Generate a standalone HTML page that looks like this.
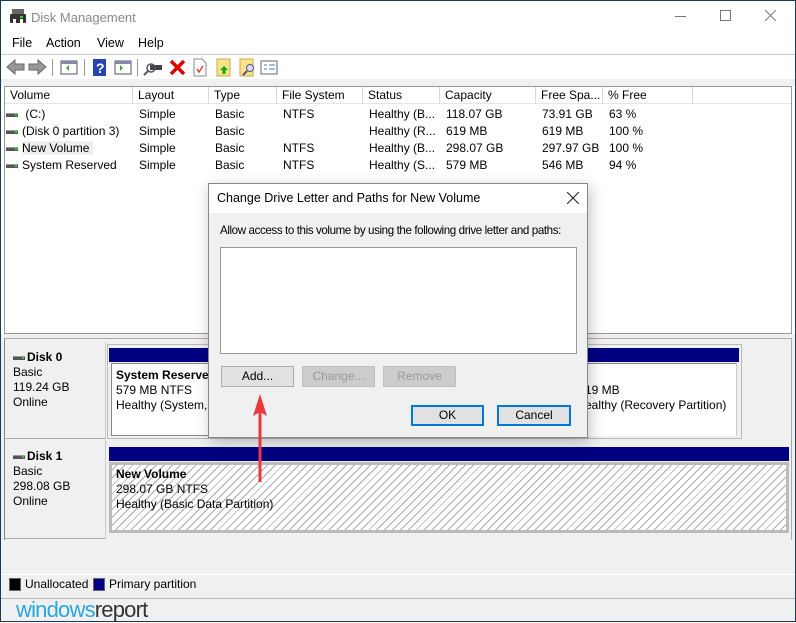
<!DOCTYPE html>
<html><head><meta charset="utf-8"><style>
*{margin:0;padding:0;box-sizing:border-box}
body{width:796px;height:622px;overflow:hidden;background:#fff;font-family:"Liberation Sans",sans-serif;font-size:12px;color:#000;position:relative}
.a{position:absolute;white-space:nowrap}
.hdr{position:absolute;top:87px;height:17px;background:#fff;border-right:1px solid #d5d5d5;border-bottom:1px solid #e5e5e5;padding-left:5px;line-height:16px}
.drv{display:inline-block;width:12px;height:4px;background:#555;border-top:1px solid #999;vertical-align:middle;margin-right:4px;position:relative}
.drv:after{content:"";position:absolute;right:1px;top:0;width:2px;height:2px;background:#3c3}
.btn{position:absolute;height:21px;background:#e1e1e1;border:1px solid #adadad;text-align:center;line-height:19px}
.dis{color:#999;background:#ccc;border-color:#bfbfbf}
.hatch{background:repeating-linear-gradient(135deg,#fff 0 3px,#aaa 3px 4px,#fff 4px 5.6px)}
</style></head><body>
<div class="a" style="left:0;top:0;width:796px;height:622px;border:1px solid #1a3a5a"></div>
<svg class="a" style="left:10px;top:9px" width="16" height="14"><rect x="2" y="0" width="12" height="5" fill="#666"/><rect x="0" y="5" width="16" height="9" rx="1" fill="#333"/><rect x="10" y="7" width="3" height="2" fill="#3c3"/><rect x="3" y="10" width="3" height="4" fill="#fff"/><rect x="10" y="10" width="3" height="4" fill="#fff"/></svg>
<div class="a" style="left:31px;top:10px;font-size:13px;color:#888">Disk Management</div>
<div class="a" style="left:675px;top:16px;width:11px;height:1px;background:#777"></div>
<div class="a" style="left:720px;top:10px;width:11px;height:11px;border:1px solid #777"></div>
<svg class="a" style="left:765px;top:10px" width="11" height="11"><path d="M0 0L11 11M11 0L0 11" stroke="#777" stroke-width="1"/></svg>
<div class="a" style="left:12px;top:36px;font-size:12.5px">File</div>
<div class="a" style="left:46px;top:36px;font-size:12.5px">Action</div>
<div class="a" style="left:97px;top:36px;font-size:12.5px">View</div>
<div class="a" style="left:138px;top:36px;font-size:12.5px">Help</div>
<div class="a" style="left:1px;top:54px;width:794px;height:1px;background:#c8c8c8"></div>
<svg class="a" style="left:0;top:55px" width="300" height="24">
<path d="M7 12 L15 5 V9 H24 V15 H15 V19 Z" fill="#999" stroke="#666"/>
<path d="M46 12 L38 5 V9 H29 V15 H38 V19 Z" fill="#999" stroke="#666"/>
<rect x="52" y="4" width="1" height="17" fill="#999"/>
<rect x="61" y="6" width="16" height="13" fill="#fff" stroke="#556"/><rect x="61" y="6" width="16" height="3" fill="#88a"/><path d="M69 10 l-3 3 3 3z" fill="#3a3"/>
<rect x="84" y="4" width="1" height="17" fill="#999"/>
<rect x="93" y="4" width="13" height="17" fill="#2844b0"/><text x="96" y="18" font-size="14" fill="#fff" font-family="Liberation Sans" font-weight="bold">?</text>
<rect x="115" y="6" width="16" height="13" fill="#fff" stroke="#556"/><rect x="115" y="6" width="16" height="3" fill="#88a"/><path d="M120 10 l3 3 -3 3z" fill="#3a3"/>
<rect x="137" y="4" width="1" height="17" fill="#999"/>
<rect x="150" y="10" width="12" height="5" fill="#444"/><circle cx="151" cy="13" r="4" fill="none" stroke="#556" stroke-width="1.5"/><line x1="148" y1="16" x2="144" y2="20" stroke="#556" stroke-width="2"/>
<path d="M171 6 L184 19 M184 6 L171 19" stroke="#d00" stroke-width="3.5"/>
<path d="M194 4 H202 L206 8 V21 H194 Z" fill="#fff" stroke="#888"/><path d="M197 14 l2 3 4-6" stroke="#e33" fill="none" stroke-width="1.4"/>
<rect x="217" y="4" width="13" height="17" fill="#fbe38a" stroke="#cca84a"/><path d="M226 12 l4 4 h-2.5 v4 h-3 v-4 h-2.5z" fill="#1a1" transform="translate(-2 -1)"/>
<rect x="240" y="4" width="13" height="17" fill="#fbe38a" stroke="#cca84a"/><circle cx="250" cy="13" r="3.5" fill="#dde" stroke="#558"/><line x1="247" y1="16" x2="243" y2="20" stroke="#558" stroke-width="2"/>
<rect x="261" y="6" width="16" height="13" fill="#fff" stroke="#667"/><path d="M264 10h3M264 14h3M269 10h6M269 14h6" stroke="#57a"/>
</svg>
<div class="a" style="left:1px;top:79px;width:794px;height:7px;background:#f0f0f0"></div>
<div class="a" style="left:4px;top:86px;width:788px;height:248px;border:1px solid #999;background:#fff"></div>
<div class="hdr" style="left:5px;width:128px">Volume</div>
<div class="hdr" style="left:133px;width:76px">Layout</div>
<div class="hdr" style="left:209px;width:68px">Type</div>
<div class="hdr" style="left:277px;width:86px">File System</div>
<div class="hdr" style="left:363px;width:77px">Status</div>
<div class="hdr" style="left:440px;width:96px">Capacity</div>
<div class="hdr" style="left:536px;width:67px">Free Spa...</div>
<div class="hdr" style="left:603px;width:90px">% Free</div>
<div class="hdr" style="left:693px;width:98px;border-right:none"></div>
<div class="a" style="left:6px;top:106px;line-height:17px">
<div><span class="drv"></span> (C:)</div><div><span class="drv"></span>(Disk 0 partition 3)</div><div><span class="drv"></span><span style="background:#eee">New Volume&nbsp;</span></div><div><span class="drv"></span>System Reserved</div></div>
<div class="a" style="left:139px;top:106px;line-height:17px">Simple<br>Simple<br>Simple<br>Simple</div>
<div class="a" style="left:215px;top:106px;line-height:17px">Basic<br>Basic<br>Basic<br>Basic</div>
<div class="a" style="left:283px;top:106px;line-height:17px">NTFS<br><br>NTFS<br>NTFS</div>
<div class="a" style="left:369px;top:106px;line-height:17px">Healthy (B...<br>Healthy (R...<br>Healthy (B...<br>Healthy (S...</div>
<div class="a" style="left:446px;top:106px;line-height:17px">118.07 GB<br>619 MB<br>298.07 GB<br>579 MB</div>
<div class="a" style="left:542px;top:106px;line-height:17px">73.91 GB<br>619 MB<br>297.97 GB<br>546 MB</div>
<div class="a" style="left:609px;top:106px;line-height:17px">63 %<br>100 %<br>100 %<br>94 %</div>
<div class="a" style="left:1px;top:334px;width:794px;height:264px;background:#f0f0f0"></div>
<div class="a" style="left:4px;top:338px;width:788px;height:202px;border-left:1px solid #888;border-top:1px solid #aaa;border-right:1px solid #aaa"></div>
<div class="a" style="left:5px;top:342px;width:101px;height:97px;border-right:1px solid #ccc;border-bottom:1px solid #aaa"></div>
<div class="a" style="left:5px;top:440px;width:101px;height:99px;border-right:1px solid #ccc;border-bottom:1px solid #aaa"></div>
<div class="a" style="left:13px;top:350px;line-height:15px"><b><span class="drv" style="margin-right:2px"></span>Disk 0</b><br>Basic<br>119.24 GB<br>Online</div>
<div class="a" style="left:13px;top:449px;line-height:15px"><b><span class="drv" style="margin-right:2px"></span>Disk 1</b><br>Basic<br>298.08 GB<br>Online</div>
<div class="a" style="left:107px;top:344px;width:635px;height:95px;border:1px solid #bbb"></div>
<div class="a" style="left:109px;top:348px;width:630px;height:14px;background:#000080"></div>
<div class="a" style="left:111px;top:363px;width:100px;height:73px;background:#fff;border:1px solid #888"></div>
<div class="a" style="left:116px;top:368px;line-height:15px"><b>System Reserved</b><br>579 MB NTFS<br>Healthy (System, A</div>
<div class="a" style="left:585px;top:363px;width:152px;height:73px;background:#fff;border-top:1px solid #888;border-right:1px solid #ccc"></div>
<div class="a" style="left:585px;top:383px;line-height:15px">19 MB<br>ealthy (Recovery Partition)</div>
<div class="a" style="left:109px;top:447px;width:680px;height:14px;background:#000080"></div>
<div class="a hatch" style="left:109px;top:462px;width:680px;height:71px;border:3px solid #bbb"></div>
<div class="a" style="left:116px;top:467px;line-height:15px"><b>New Volume</b><br>298.07 GB NTFS<br>Healthy (Basic Data Partition)</div>
<div class="a" style="left:1px;top:574px;width:794px;height:1px;background:#fff"></div>
<div class="a" style="left:9px;top:578px;width:12px;height:13px;background:#000;border:1px solid #666"></div>
<div class="a" style="left:25px;top:577px">Unallocated</div>
<div class="a" style="left:93px;top:578px;width:12px;height:13px;background:#000080;border:1px solid #666"></div>
<div class="a" style="left:109px;top:577px">Primary partition</div>
<div class="a" style="left:1px;top:598px;width:794px;height:1px;background:#bbb"></div>
<div class="a" style="left:1px;top:599px;width:794px;height:22px;background:#f0f0f0"></div>
<div class="a" style="left:16px;top:597px;font-size:22px;letter-spacing:-0.8px"><span style="color:#2aa7e0">windows</span><span style="color:#333">report</span></div>
<div class="a" style="left:208px;top:183px;width:380px;height:255px;background:#f0f0f0;border:1px solid #888;box-shadow:2px 4px 14px rgba(0,0,0,.25)"></div>
<div class="a" style="left:209px;top:184px;width:378px;height:29px;background:#fff"></div>
<div class="a" style="left:217px;top:191px;font-size:12.5px">Change Drive Letter and Paths for New Volume</div>
<svg class="a" style="left:567px;top:192px" width="12" height="12"><path d="M0 0L12 12M12 0L0 12" stroke="#222" stroke-width="1.1"/></svg>
<div class="a" style="left:220px;top:224px;font-size:11.6px;letter-spacing:-0.4px">Allow access to this volume by using the following drive letter and paths:</div>
<div class="a" style="left:220px;top:247px;width:357px;height:107px;background:#fff;border:1px solid #999"></div>
<div class="btn" style="left:221px;top:366px;width:73px">Add...</div>
<div class="btn dis" style="left:302px;top:366px;width:73px">Change...</div>
<div class="btn dis" style="left:383px;top:366px;width:73px">Remove</div>
<div class="btn" style="left:411px;top:405px;width:73px;border:2px solid #0078d7;line-height:17px">OK</div>
<div class="btn" style="left:497px;top:405px;width:74px;border:2px solid #0078d7;line-height:17px">Cancel</div>
<svg class="a" style="left:248px;top:392px" width="24" height="92"><line x1="12" y1="18" x2="12" y2="90" stroke="#e8393f" stroke-width="3"/><path d="M12 2 L19 24 L12 20 L5 24 Z" fill="#e8393f"/></svg>
</body></html>
